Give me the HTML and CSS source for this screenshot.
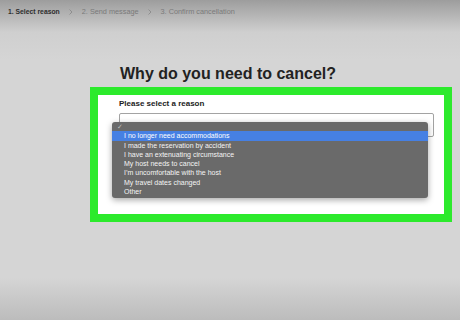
FILE: index.html
```html
<!DOCTYPE html>
<html lang="en">
<head>
    <meta charset="UTF-8">
    <meta name="viewport" content="width=device-width, initial-scale=1.0">
    <title>Cancel Reservation</title>
    <link rel="stylesheet" href="styles.css">
</head>
<body>

    <!-- Step indicator -->
    <nav class="steps">
        <span class="step active">1. Select reason</span>
        <svg class="chevron" width="4" height="6" viewBox="0 0 4 6"><path d="M0.5 0.5 L3 3 L0.5 5.5" fill="none" stroke="#8a8a8a" stroke-width="0.9"/></svg>
        <span class="step">2. Send message</span>
        <svg class="chevron" width="4" height="6" viewBox="0 0 4 6"><path d="M0.5 0.5 L3 3 L0.5 5.5" fill="none" stroke="#8a8a8a" stroke-width="0.9"/></svg>
        <span class="step">3. Confirm cancellation</span>
    </nav>

    <div class="main">
        <h1>Why do you need to cancel?</h1>

        <div class="card">
            <label class="field-label" for="reason">Please select a reason</label>
            <div class="select-wrap">
                <div class="select-box" id="reason"></div>

                <!-- Open dropdown menu -->
                <ul class="menu">
                    <li class="check">&#10003;</li>
                    <li class="selected">I no longer need accommodations</li>
                    <li>I made the reservation by accident</li>
                    <li>I have an extenuating circumstance</li>
                    <li>My host needs to cancel</li>
                    <li>I’m uncomfortable with the host</li>
                    <li>My travel dates changed</li>
                    <li>Other</li>
                </ul>
            </div>
        </div>
    </div>

</body>
</html>
```

FILE: styles.css
```css
html, body {
    margin: 0;
    padding: 0;
}

body {
    font-family: "Liberation Sans", Arial, sans-serif;
    height: 320px;
    background: linear-gradient(to bottom, #9d9d9d 0px, #cfcfcf 32px, #d5d5d5 60px, #d5d5d5 278px, #bcbcbc 320px);
    overflow: hidden;
}

.steps {
    display: flex;
    align-items: center;
    gap: 9px;
    height: 30px;
    padding: 7px 0 0 8px;
    box-sizing: border-box;
    align-items: flex-start;
}

.step {
    font-size: 7.3px;
    line-height: 10px;
    color: #7a7a7a;
}

.step.active {
    font-weight: bold;
    font-size: 6.8px;
    color: #2e2e2e;
}

.chevron {
    margin-top: 2px;
}

.main {
    padding: 35px 0 0 90px;
}

h1 {
    margin: 0 0 4px 30px;
    font-size: 16px;
    line-height: 18px;
    color: #222;
}

.card {
    width: 362px;
    height: 135px;
    box-sizing: border-box;
    border: 8px solid #2cea2c;
    background-color: #ffffff;
    padding: 4px 0 0 21px;
}

.field-label {
    display: block;
    font-size: 8px;
    line-height: 10px;
    font-weight: bold;
    color: #222;
    margin-bottom: 4px;
}

.select-wrap {
    position: relative;
    width: 315px;
}

.select-box {
    height: 24px;
    box-sizing: border-box;
    border: 1px solid #a3a3a3;
    border-radius: 2px;
    background-color: #fff;
}

.menu {
    position: absolute;
    left: -7px;
    top: 9px;
    width: 316px;
    margin: 0;
    padding: 0 0 2px 0;
    list-style: none;
    background-color: #6a6a6a;
    border-radius: 3px;
    box-shadow: 0 2px 6px rgba(0, 0, 0, 0.35);
}

.menu li {
    height: 9.3px;
    line-height: 9.3px;
    font-size: 7px;
    color: #f4f4f4;
    padding-left: 12px;
    white-space: nowrap;
}

.menu li.check {
    padding-left: 5px;
    font-size: 7px;
    color: #bdbdbd;
}

.menu li.selected {
    background-color: #4680e3;
    color: #ffffff;
}
```
